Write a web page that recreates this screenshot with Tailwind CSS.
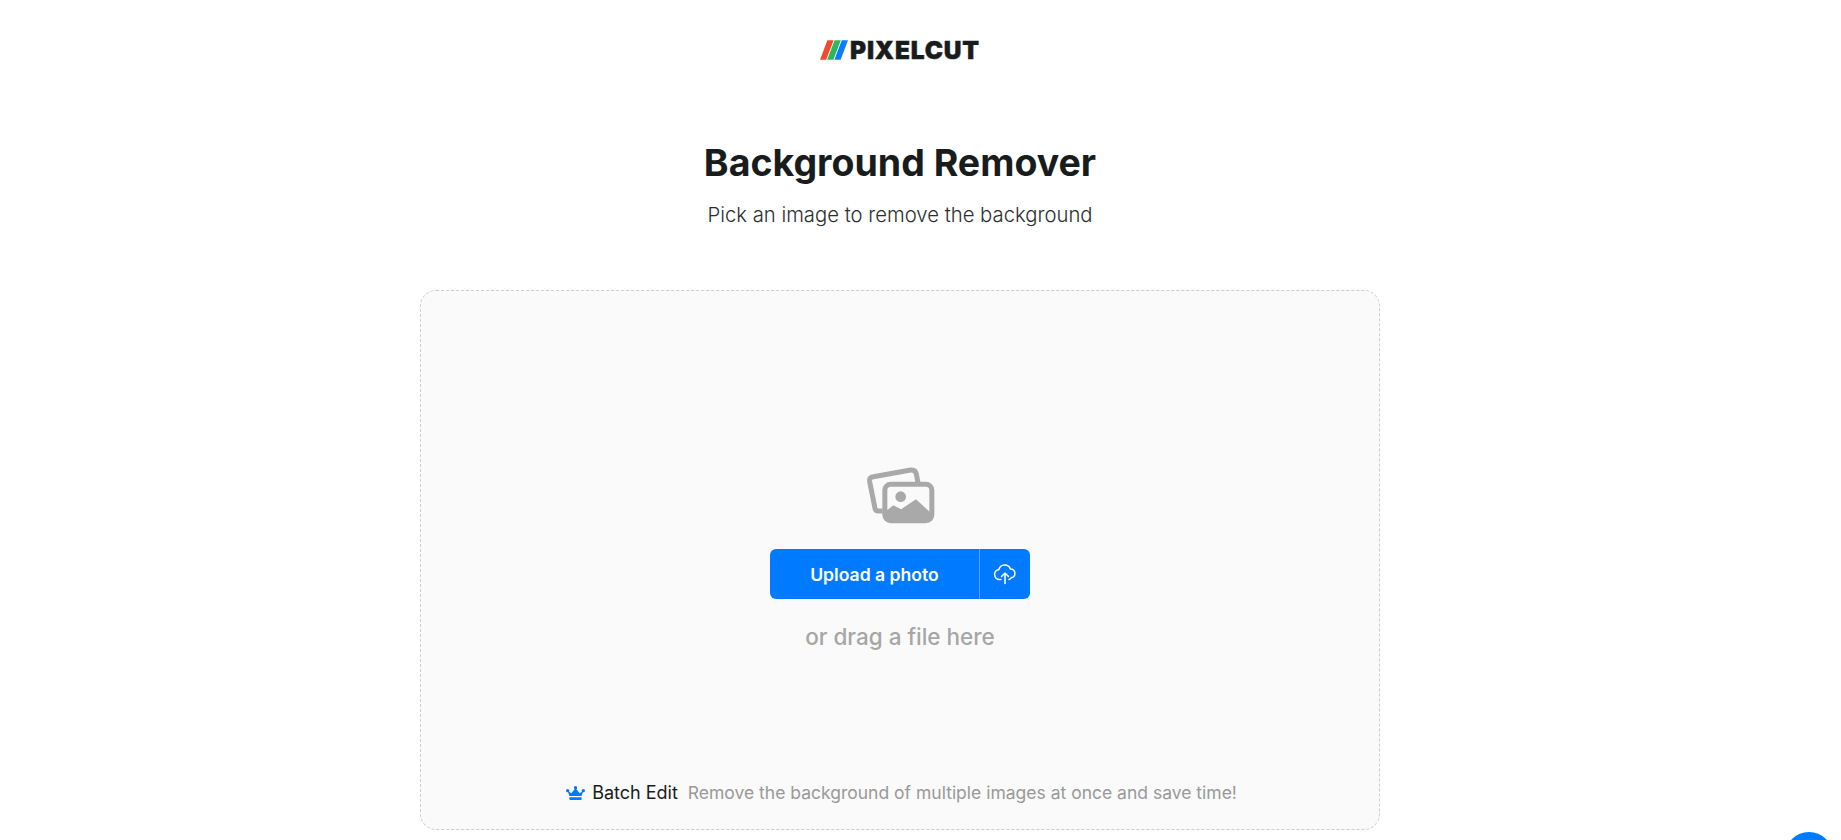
<!DOCTYPE html>
<html>
<head>
<meta charset="utf-8">
<script src="https://cdn.jsdelivr.net/npm/@tailwindcss/browser@4"></script>
</head>
<body class="bg-white overflow-hidden h-[840px] font-['Inter',sans-serif] text-[#181c1c]">
<main class="flex flex-col items-center w-[1800px]">
  <header class="h-[100px] pt-[38px] flex justify-center">
    <div class="flex items-center gap-[2px] h-6">
      <svg width="28" height="20" viewBox="0 0 28.4 20">
        <polygon points="7.5,0 13.8,0 6.3,20 0,20" fill="#f04a2f"/>
        <polygon points="14.8,0 21.1,0 13.6,20 7.3,20" fill="#2eb85c"/>
        <polygon points="22.1,0 28.4,0 20.9,20 14.6,20" fill="#0a7cff"/>
      </svg>
      <span class="text-[24.5px] leading-6 font-black tracking-[0.8px] text-[#181c1c] [-webkit-text-stroke:0.4px_#181c1c]">PIXELCUT</span>
    </div>
  </header>
  <h1 class="text-[37.5px] leading-[44px] font-bold mt-[41px] text-[#181c1c]">Background Remover</h1>
  <p class="text-[20.3px] leading-7 font-light mt-[16px] text-[#2a2e2e]">Pick an image to remove the background</p>
  <section class="relative mt-[61px] w-[960px] h-[540px] rounded-2xl border border-dashed border-[#cfcfcf] bg-[#fafafa] flex flex-col items-center">
    <svg class="mt-[175px] ml-[2px]" width="70" height="58" viewBox="78 48 210 174" fill="none">
      <path d="M128 183 L115 183 Q107 183 105 175 L89 95 Q87 82 100 80 L212 60 Q226 58 229 72 L234 98" stroke="#a9a9a9" stroke-width="15" stroke-linejoin="round"/>
      <rect x="134.5" y="102.5" width="141" height="110" rx="18" stroke="#a9a9a9" stroke-width="15"/>
      <circle cx="182" cy="140" r="16" fill="#a9a9a9"/>
      <path d="M138 183 L160 166 L183 178 L228 148 L274 190 L274 212 L138 212 Z" fill="#a9a9a9"/>
    </svg>
    <div class="mt-[25px] w-[260px] h-[50px] rounded-md bg-[#007aff] flex text-white">
      <div class="w-[210px] pt-[2px] flex items-center justify-center text-[17.6px] font-semibold border-r border-[#5aa9ff]">Upload a photo</div>
      <div class="flex-1 flex items-center justify-center">
        <svg width="24" height="24" viewBox="0 0 24 24" fill="none" stroke="white" stroke-width="1.5" stroke-linecap="round" stroke-linejoin="round">
          <path d="M8 17.5H6.5a5 5 0 0 1-.6-9.95A6 6 0 0 1 17.4 7a4.4 4.4 0 0 1 1 8.7 4 4 0 0 1-2.4 1.8"/>
          <path d="M12 21.5V11M8.5 14.5L12 11l3.5 3.5"/>
        </svg>
      </div>
    </div>
    <p class="mt-[22px] text-[22.5px] leading-8 font-medium text-[#a6a6a6]">or drag a file here</p>
    <div class="absolute bottom-[24px] left-[3px] right-0 flex items-center justify-center text-[18px] leading-6">
      <svg class="mr-[7px]" width="19" height="14.3" viewBox="0 0 57 43" fill="#007aff">
        <circle cx="5" cy="14" r="5"/><circle cx="28.5" cy="5" r="5"/><circle cx="52" cy="14" r="5"/>
        <path d="M5 14 L16 22 L28.5 6 L41 22 L52 14 L47 30 H10 Z"/>
        <path d="M10 34 H47 V38 Q47 43 42 43 H15 Q10 43 10 38 Z"/>
      </svg>
      <span class="text-[#181c1c]">Batch Edit</span>
      <span class="ml-[10px] text-[17.5px] text-[#999999] font-normal">Remove the background of multiple images at once and save time!</span>
    </div>
  </section>
</main>
<div class="fixed left-[1785px] top-[832px] w-12 h-12 rounded-full bg-[#007aff]"></div>
</body>
</html>
